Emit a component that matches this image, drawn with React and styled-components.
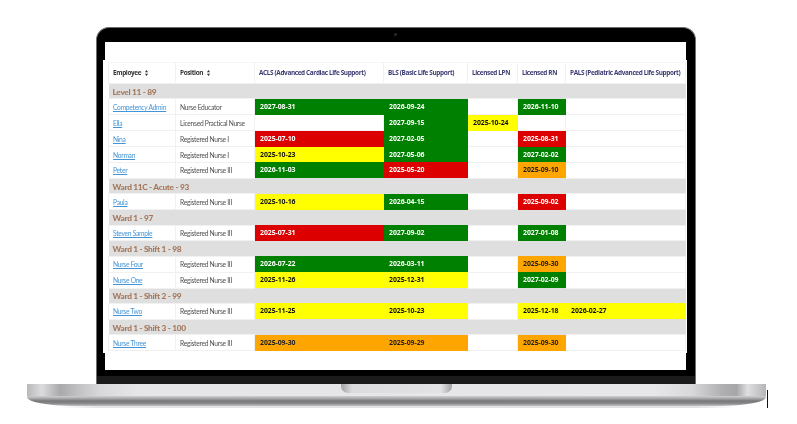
import React from "react";
import styled, { createGlobalStyle } from "styled-components";

const Global = createGlobalStyle`
  html, body { margin: 0; padding: 0; background: #fff; }
  * { box-sizing: border-box; }
`;

const Stage = styled.div`
  width: 797px;
  height: 424px;
  padding-top: 27px;
  overflow: hidden;
  background: #fff;
  display: flex;
  flex-direction: column;
`;

const Lid = styled.div`
  position: relative;
  width: 600px;
  height: 357px;
  margin-left: 96px;
  padding: 14px 9px 0 8px;
  background: #000;
  border: solid #6e6e6e;
  border-width: 1.5px 1.5px 0 1.5px;
  border-radius: 13px 13px 0 0;
  display: flex;
  flex-direction: column;
`;

const Camera = styled.span`
  position: absolute;
  left: 297px;
  top: 5px;
  width: 3px;
  height: 3px;
  border-radius: 50%;
  background: #2a2a2e;
`;

const Screen = styled.div`
  height: 328px;
  background: #fff;
  filter: blur(0.35px);
`;

const TableWrap = styled.div`
  margin: 18px -1px 0 -2px;
  padding: 2px 0 0 5px;
  height: 293px;
  background: #fff;
`;

const Table = styled.table`
  width: 577px;
  table-layout: fixed;
  border-collapse: collapse;
  font-family: "Lato", "Open Sans", sans-serif;
  font-size: 6.7px;
  letter-spacing: -0.28px;
  color: #505050;
`;

const HeadRow = styled.tr`
  height: 21px;
`;

const Th = styled.th`
  padding: 0 0 1px 4px;
  border: 1px solid #f1f1f1;
  border-top-color: #f6f6f6;
  text-align: left;
  font-family: "Open Sans", sans-serif;
  font-size: 6.4px;
  letter-spacing: -0.35px;
  font-weight: 700;
  white-space: nowrap;
  color: ${(p) => (p.$plain ? "#333" : "#3b3b73")};
`;

const SortIcon = styled.svg`
  width: 5px;
  height: 6px;
  margin-left: 3px;
  vertical-align: -1px;
`;

const GroupRow = styled.tr`
  height: 15.4px;
`;

const GroupCell = styled.td`
  padding: 1px 0 0 4px;
  background: #dfdfdf;
  color: #a5785c;
  font-size: 8.3px;
  letter-spacing: -0.3px;
  font-weight: 900;
  white-space: nowrap;
`;

const Row = styled.tr`
  height: 15.9px;
`;

const Td = styled.td`
  padding: 0 0 0 4px;
  border: 1px solid #f1f1f1;
  white-space: nowrap;
  overflow: hidden;
  line-height: 10px;
`;

const NameLink = styled.a`
  color: #4595d6;
  text-decoration: underline;
`;

const COLORS = {
  g: ["#008000", "#fff"],
  r: ["#dd0000", "#fff"],
  y: ["#ffff00", "#111"],
  o: ["#ffa500", "#222"],
};

const DateCell = styled.td`
  padding: 0 0 0 5px;
  font-family: "Open Sans", sans-serif;
  font-size: 6.9px;
  letter-spacing: -0.05px;
  font-weight: 700;
  line-height: 10px;
  white-space: nowrap;
  border: 1px solid ${(p) => (p.$tone ? "transparent" : "#f1f1f1")};
  background: ${(p) => (p.$tone ? COLORS[p.$tone][0] : "#fff")};
  color: ${(p) => (p.$tone ? COLORS[p.$tone][1] : "#000")};
`;

const Chin = styled.div`
  margin: auto -9px 0 -8px;
  height: 8px;
  background: #1b1b1b;
`;

const Base = styled.div`
  position: relative;
  width: 739px;
  margin-left: 27px;
  display: flex;
  flex-direction: column;
  align-items: center;
`;

const BaseTop = styled.div`
  width: 100%;
  height: 12px;
  background: linear-gradient(
    90deg,
    #b8b8ba 0,
    #dcdcde 2%,
    #a9a9ac 4.5%,
    #c2c2c4 7%,
    #d9d9db 10%,
    #e6e6e8 15%,
    #e7e7e9 85%,
    #d8d8da 90%,
    #b0b0b3 94%,
    #a6a6a9 96%,
    #dfdfe1 97.5%,
    #b5b5b8 100%
  );
  display: flex;
  justify-content: center;
`;

const Notch = styled.div`
  width: 111px;
  height: 9px;
  margin-left: -1px;
  border-radius: 0 0 7px 7px;
  background: linear-gradient(90deg, #a3a3a6 0, #dcdcde 10%, #e2e2e4 90%, #a3a3a6 100%);
`;

const BaseBottom = styled.div`
  width: 100%;
  height: 10px;
  border-radius: 0 0 46px 46px / 0 0 9px 9px;
  background: linear-gradient(180deg, #cfcfd1 0, #a8a8aa 25%, #77777a 50%, #8b8b8e 75%, #c4c4c6 100%);
`;

const Shadow = styled.div`
  width: 92%;
  height: 2px;
  background: linear-gradient(90deg, #fff 0, #e4e4e4 6%, #e0e0e0 94%, #fff 100%);
`;

const EdgeMark = styled.span`
  position: absolute;
  right: -2px;
  top: 6px;
  width: 1px;
  height: 18px;
  background: #111;
`;

const SortGlyph = () => (
  <SortIcon viewBox="0 0 5 8" aria-hidden="true">
    <path d="M2.5 0 L4.6 3 H.4 Z M2.5 8 L.4 5 H4.6 Z" fill="#333" />
  </SortIcon>
);

const RN3 = "Registered Nurse III";
const RN1 = "Registered Nurse I";

const GROUPS = [
  {
    title: "Level 11 - 89",
    rows: [
      ["Competency Admin", "Nurse Educator", ["2027-08-31", "g"], ["2026-09-24", "g"], null, ["2026-11-10", "g"], null],
      ["Ella", "Licensed Practical Nurse", null, ["2027-09-15", "g"], ["2025-10-24", "y"], null, null],
      ["Nina", RN1, ["2025-07-10", "r"], ["2027-02-05", "g"], null, ["2025-08-31", "r"], null],
      ["Norman", RN1, ["2025-10-23", "y"], ["2027-05-06", "g"], null, ["2027-02-02", "g"], null],
      ["Peter", RN3, ["2026-11-03", "g"], ["2025-05-20", "r"], null, ["2025-09-10", "o"], null],
    ],
  },
  {
    title: "Ward 11C - Acute - 93",
    rows: [["Paula", RN3, ["2025-10-16", "y"], ["2026-04-15", "g"], null, ["2025-09-02", "r"], null]],
  },
  {
    title: "Ward 1 - 97",
    rows: [["Steven Sample", RN3, ["2025-07-31", "r"], ["2027-09-02", "g"], null, ["2027-01-08", "g"], null]],
  },
  {
    title: "Ward 1 - Shift 1 - 98",
    rows: [
      ["Nurse Four", RN3, ["2026-07-22", "g"], ["2026-03-11", "g"], null, ["2025-09-30", "o"], null],
      ["Nurse One", RN3, ["2025-11-26", "y"], ["2025-12-31", "y"], null, ["2027-02-09", "g"], null],
    ],
  },
  {
    title: "Ward 1 - Shift 2 - 99",
    rows: [["Nurse Two", RN3, ["2025-11-25", "y"], ["2025-10-23", "y"], null, ["2025-12-18", "y"], ["2026-02-27", "y"]]],
  },
  {
    title: "Ward 1 - Shift 3 - 100",
    rows: [["Nurse Three", RN3, ["2025-09-30", "o"], ["2025-09-29", "o"], null, ["2025-09-30", "o"], null]],
  },
];

const CERTS = [
  "ACLS (Advanced Cardiac Life Support)",
  "BLS (Basic Life Support)",
  "Licensed LPN",
  "Licensed RN",
  "PALS (Pediatric Advanced Life Support)",
];

const WIDTHS = [67, 79, 129, 84, 50, 48, 120];

export default function App() {
  return (
    <Stage>
      <Global />
      <Lid>
        <Camera />
        <Screen>
          <TableWrap>
            <Table>
              <colgroup>
                {WIDTHS.map((w, i) => (
                  <col key={i} width={w} />
                ))}
              </colgroup>
              <thead>
                <HeadRow>
                  <Th $plain>Employee<SortGlyph /></Th>
                  <Th $plain>Position<SortGlyph /></Th>
                  {CERTS.map((c) => (
                    <Th key={c}>{c}</Th>
                  ))}
                </HeadRow>
              </thead>
              <tbody>
                {GROUPS.map((g) => (
                  <React.Fragment key={g.title}>
                    <GroupRow>
                      <GroupCell colSpan={7}>{g.title}</GroupCell>
                    </GroupRow>
                    {g.rows.map(([name, pos, ...dates]) => (
                      <Row key={name}>
                        <Td><NameLink href="#">{name}</NameLink></Td>
                        <Td>{pos}</Td>
                        {dates.map((d, i) =>
                          d ? (
                            <DateCell key={i} $tone={d[1]}>{d[0]}</DateCell>
                          ) : (
                            <DateCell key={i} />
                          )
                        )}
                      </Row>
                    ))}
                  </React.Fragment>
                ))}
              </tbody>
            </Table>
          </TableWrap>
        </Screen>
        <Chin />
      </Lid>
      <Base>
        <BaseTop><Notch /></BaseTop>
        <BaseBottom />
        <Shadow />
        <EdgeMark />
      </Base>
    </Stage>
  );
}
